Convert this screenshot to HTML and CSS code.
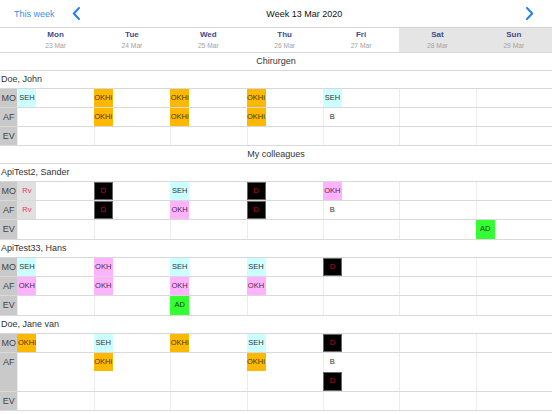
FILE: index.html
```html
<!DOCTYPE html>
<html>
<head>
<meta charset="utf-8">
<link rel="stylesheet" href="styles.css">
</head>
<body>
<div class="topbar">
  <span class="this-week">This week</span>
  <svg class="chev" width="9" height="13" viewBox="0 0 9 13"><polyline points="7,1 1.8,6.5 7,12" fill="none" stroke="#1f7ff2" stroke-width="1.9" stroke-linecap="round" stroke-linejoin="round"/></svg>
  <span class="title">Week 13 Mar 2020</span>
  <svg class="chev" width="9" height="13" viewBox="0 0 9 13"><polyline points="2,1 7.2,6.5 2,12" fill="none" stroke="#1f7ff2" stroke-width="1.9" stroke-linecap="round" stroke-linejoin="round"/></svg>
</div>
<div class="days">
  <div></div>
  <div class="day"><span class="dn">Mon</span><span class="dd">23 Mar</span></div>
  <div class="day"><span class="dn">Tue</span><span class="dd">24 Mar</span></div>
  <div class="day"><span class="dn">Wed</span><span class="dd">25 Mar</span></div>
  <div class="day"><span class="dn">Thu</span><span class="dd">26 Mar</span></div>
  <div class="day"><span class="dn">Fri</span><span class="dd">27 Mar</span></div>
  <div class="day we"><span class="dn">Sat</span><span class="dd">28 Mar</span></div>
  <div class="day we"><span class="dn">Sun</span><span class="dd">29 Mar</span></div>
</div>

<div class="section">Chirurgen</div>
<div class="name">Doe, John</div>
<div class="row"><div class="lbl">MO</div>
  <div class="c"><span class="b seh">SEH</span></div>
  <div class="c"><span class="b okhi">OKHi</span></div>
  <div class="c"><span class="b okhi">OKHi</span></div>
  <div class="c"><span class="b okhi">OKHi</span></div>
  <div class="c"><span class="b seh">SEH</span></div>
  <div class="c"></div><div class="c"></div>
</div>
<div class="row"><div class="lbl">AF</div>
  <div class="c"></div>
  <div class="c"><span class="b okhi">OKHi</span></div>
  <div class="c"><span class="b okhi">OKHi</span></div>
  <div class="c"><span class="b okhi">OKHi</span></div>
  <div class="c"><span class="b plain">B</span></div>
  <div class="c"></div><div class="c"></div>
</div>
<div class="row"><div class="lbl">EV</div>
  <div class="c"></div><div class="c"></div><div class="c"></div><div class="c"></div><div class="c"></div><div class="c"></div><div class="c"></div>
</div>

<div class="section">My colleagues</div>
<div class="name">ApiTest2, Sander</div>
<div class="row"><div class="lbl">MO</div>
  <div class="c"><span class="b rv">Rv</span></div>
  <div class="c"><span class="b d">D</span></div>
  <div class="c"><span class="b seh">SEH</span></div>
  <div class="c"><span class="b d">D</span></div>
  <div class="c"><span class="b okh">OKH</span></div>
  <div class="c"></div><div class="c"></div>
</div>
<div class="row"><div class="lbl">AF</div>
  <div class="c"><span class="b rv">Rv</span></div>
  <div class="c"><span class="b d">D</span></div>
  <div class="c"><span class="b okh">OKH</span></div>
  <div class="c"><span class="b d">D</span></div>
  <div class="c"><span class="b plain">B</span></div>
  <div class="c"></div><div class="c"></div>
</div>
<div class="row"><div class="lbl">EV</div>
  <div class="c"></div><div class="c"></div><div class="c"></div><div class="c"></div><div class="c"></div><div class="c"></div>
  <div class="c"><span class="b ad">AD</span></div>
</div>

<div class="name">ApiTest33, Hans</div>
<div class="row"><div class="lbl">MO</div>
  <div class="c"><span class="b seh">SEH</span></div>
  <div class="c"><span class="b okh">OKH</span></div>
  <div class="c"><span class="b seh">SEH</span></div>
  <div class="c"><span class="b seh">SEH</span></div>
  <div class="c"><span class="b d">D</span></div>
  <div class="c"></div><div class="c"></div>
</div>
<div class="row"><div class="lbl">AF</div>
  <div class="c"><span class="b okh">OKH</span></div>
  <div class="c"><span class="b okh">OKH</span></div>
  <div class="c"><span class="b okh">OKH</span></div>
  <div class="c"><span class="b okh">OKH</span></div>
  <div class="c"></div><div class="c"></div><div class="c"></div>
</div>
<div class="row"><div class="lbl">EV</div>
  <div class="c"></div><div class="c"></div>
  <div class="c"><span class="b ad">AD</span></div>
  <div class="c"></div><div class="c"></div><div class="c"></div><div class="c"></div>
</div>

<div class="name">Doe, Jane van</div>
<div class="row"><div class="lbl">MO</div>
  <div class="c"><span class="b okhi">OKHi</span></div>
  <div class="c"><span class="b seh">SEH</span></div>
  <div class="c"><span class="b okhi">OKHi</span></div>
  <div class="c"><span class="b seh">SEH</span></div>
  <div class="c"><span class="b d">D</span></div>
  <div class="c"></div><div class="c"></div>
</div>
<div class="row"><div class="lbl">AF</div>
  <div class="c"></div>
  <div class="c"><span class="b okhi">OKHi</span></div>
  <div class="c"></div>
  <div class="c"><span class="b okhi">OKHi</span></div>
  <div class="c"><span class="b plain">B</span><span class="b d">D</span></div>
  <div class="c"></div><div class="c"></div>
</div>
<div class="row"><div class="lbl">EV</div>
  <div class="c"></div><div class="c"></div><div class="c"></div><div class="c"></div><div class="c"></div><div class="c"></div><div class="c"></div>
</div>
</body>
</html>
```

FILE: styles.css
```css
* { box-sizing: border-box; }
html, body { margin: 0; padding: 0; background: #fff; }
body {
  width: 552px;
  height: 414px;
  overflow: hidden;
  font-family: "Liberation Sans", Arial, sans-serif;
  color: #333;
}
.topbar {
  height: 28px;
  display: flex;
  align-items: center;
  padding: 0 18px 0 14px;
  border-bottom: 1px solid #d4d4d4;
}
.this-week {
  font-size: 9px;
  color: #3a90f2;
  margin-right: 17px;
}
.chev { display: block; flex: none; }
.title {
  flex: 1;
  text-align: center;
  font-size: 9px;
  color: #111;
  padding-left: 3px;
}
.days {
  height: 25px;
  display: grid;
  grid-template-columns: 17.4px repeat(7, 1fr);
  border-bottom: 1px solid #d8d8d8;
}
.day {
  display: flex;
  flex-direction: column;
  align-items: center;
  padding-top: 1.5px;
}
.day.we { background: #e5e5e5; }
.dn {
  font-size: 8px;
  font-weight: bold;
  line-height: 10px;
  color: #3e4a8a;
}
.dd {
  font-size: 6.7px;
  line-height: 9px;
  margin-top: 1.5px;
  color: #a2a2a2;
}
.section {
  height: 17.5px;
  line-height: 16.5px;
  text-align: center;
  font-size: 9px;
  border-bottom: 1px solid #d8d8d8;
}
.name {
  height: 18px;
  line-height: 17px;
  font-size: 9px;
  padding-left: 1px;
  border-bottom: 1px solid #d8d8d8;
}
.row {
  display: grid;
  grid-template-columns: 17.4px repeat(7, 1fr);
  border-bottom: 1px solid #d9d9d9;
}
.lbl {
  background: #c9c9c9;
  font-size: 9px;
  line-height: 18.3px;
  text-align: center;
  color: #444;
}
.c {
  min-height: 18.3px;
  border-left: 1px solid #ececec;
  display: flex;
  flex-direction: column;
  gap: 1px;
}
.b {
  width: 19px;
  height: 18.3px;
  margin-left: -1px;
  font-size: 7.5px;
  line-height: 18.3px;
  text-align: center;
  white-space: nowrap;
  display: flex;
  align-items: center;
  justify-content: center;
}
.seh { background: #ccffff; color: #333; }
.okhi { background: #ffb800; color: #4a3400; }
.okh { background: #ffb3ff; color: #4a2a4a; }
.rv { background: #e0e0e0; color: #e8356c; }
.d { background: #000; color: #c8002e; border: 1px solid #666; }
.ad { background: #33ff33; color: #123a12; }
.plain { background: transparent; color: #333; }
```
